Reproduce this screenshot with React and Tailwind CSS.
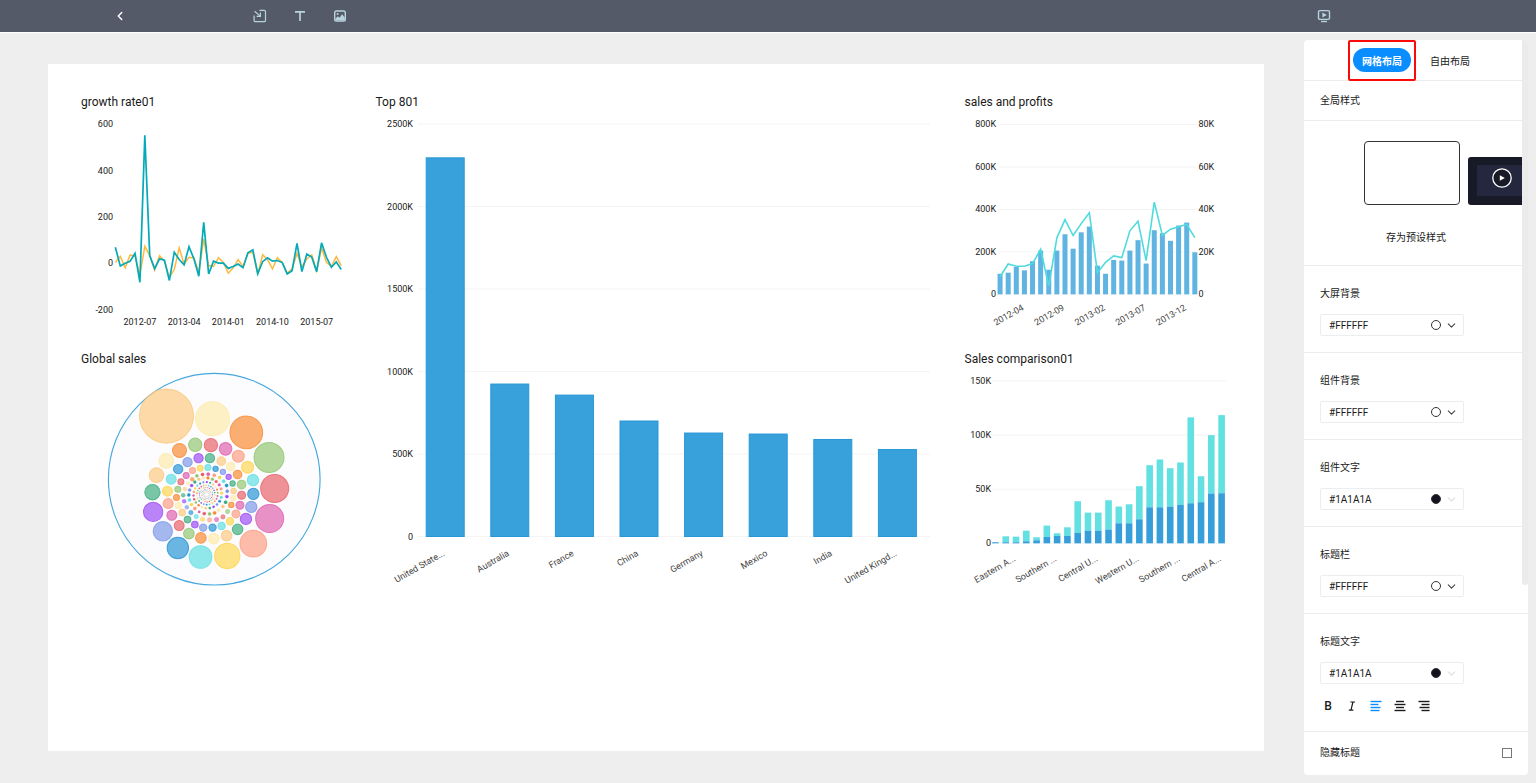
import { useState } from 'react';
import { ChevronDown, ChevronLeft } from 'lucide-react';

const GROWTH_A = [
  69, -12, 0, 9, 43, -82, 552, 33, -23, 19, 13, -74, 48, 16, -7, 72, 19, -56, 177, -46, 9, 1, 1, -22, -14, -3, -19, 45,
  58, -45, 7, 24, 9, 12, 3, -46, -32, 86, -36, 40, 27, -36, 88, 26, -17, 6, -27,
];
const GROWTH_B = [
  4, 30, -19, 36, 30, -50, 73, 33, -29, 33, 9, -61, -27, 66, -3, 26, 23, -39, 105, -10, -14, 24, 4, -43, -20, 16, -14,
  43, 48, -46, 37, 16, -24, 24, 4, -43, -24, 43, -16, 19, 36, -32, 66, 4, -14, 29, -10,
];

const COUNTRIES = [
  ['United State...', 2295],
  ['Australia', 924],
  ['France', 857],
  ['China', 700],
  ['Germany', 627],
  ['Mexico', 621],
  ['India', 588],
  ['United Kingd...', 527],
];

const SALES = [
  97, 102, 129, 113, 156, 206, 116, 206, 283, 215, 292, 319, 135, 97, 162, 159, 206, 255, 145, 302, 288, 252, 324, 338,
  198,
];
const PROFITS = [
  8.3, 14.3, 13.2, 13.2, 14.5, 21.2, 3.9, 26.6, 35.2, 27.7, 33.3, 38.4, 10.2, 15.1, 18.1, 17.3, 29.9, 34.4, 15.9, 43.4,
  27.8, 30.7, 31.8, 32.9, 26.7,
];

const TOTALS = [
  1, 6.5, 6.2, 11.7, 5.6, 16.4, 9.3, 14.8, 38.9, 28.4, 28.4, 39.8, 34, 36.1, 52.8, 72.2, 77.5, 69.4, 74.7, 116.4, 62,
  100, 118.5,
];
const LOWER = [
  1, 1, 1, 1.9, 2.8, 5.9, 6.8, 6.8, 9.6, 11.7, 11.7, 12.7, 18.5, 18.5, 22.2, 33.3, 33.3, 34, 35.5, 37, 38, 46, 46.3,
];

const BUBBLE_COLORS = [
  '#fcc87c', '#feeaa8', '#f9892f', '#90c66f', '#e96066', '#dd5eac', '#fd9c81', '#fdd54e', '#5fdfe2', '#2794d4',
  '#7b97e8', '#9c4af5', '#3bac7c',
];

// x, y, radius, from the outside of the spiral inwards
const BUBBLES = [
  [199, 153, 81], [337, 161, 51], [438, 202, 49], [506, 277, 45], [523, 370, 42], [508, 460, 42], [459, 535, 40],
  [381, 572, 38], [301, 575, 34], [233, 548, 32], [188, 498, 29], [159, 440, 29], [157, 381, 23], [169, 330, 22],
  [198, 287, 22], [238, 256, 21], [285, 239, 20], [332, 240, 20], [376, 251, 19], [414, 273, 18], [442, 306, 18],
  [458, 345, 17], [459, 386, 17], [453, 425, 17], [437, 461, 17], [412, 492, 16], [379, 511, 16], [341, 520, 16],
  [302, 518, 16], [266, 505, 16], [237, 481, 15], [215, 450, 15], [204, 415, 15], [202, 378, 15], [213, 342, 15],
  [234, 312, 14], [262, 291, 14], [295, 279, 14], [329, 279, 14], [363, 288, 13], [391, 304, 13], [412, 328, 13],
  [424, 358, 13], [424, 390, 12], [419, 420, 12], [407, 446, 12], [389, 468, 11], [364, 482, 11], [337, 487, 11],
  [309, 487, 11], [284, 478, 10], [262, 463, 10], [246, 442, 10], [234, 421, 9], [229, 397, 9], [233, 372, 9],
  [242, 350, 9], [258, 331, 9], [277, 316, 9], [300, 309, 9], [323, 307, 9], [346, 311, 8], [368, 320, 8],
  [385, 335, 8], [397, 355, 8], [400, 377, 8], [399, 398, 8], [393, 419, 8], [382, 439, 7], [368, 455, 7],
  [349, 463, 7], [328, 464, 7], [307, 462, 7], [288, 454, 7], [272, 442, 7], [260, 426, 6], [252, 408, 6],
  [249, 390, 6], [254, 371, 6], [264, 355, 6], [276, 342, 6], [290, 332, 5], [307, 328, 5], [324, 327, 5],
  [342, 330, 5], [358, 337, 5], [370, 348, 5], [379, 361, 5], [381, 378, 5], [380, 394, 5], [376, 411, 5],
  [368, 424, 5], [355, 435, 5], [343, 443, 5], [328, 446, 5], [312, 445, 5], [297, 440, 4],
];

// the long tail keeps shrinking towards the middle
for (let i = 1; i < 170; i++) {
  const dist = 56 * Math.pow(0.9865, i);
  const angle = ((113 + i * 16.2) * Math.PI) / 180;
  BUBBLES.push([319 + dist * Math.cos(angle), 387 + dist * Math.sin(angle), dist * 0.09]);
}

const toPoints = (values, x, y) => values.map((v, i) => `${x(i)},${y(v)}`).join(' ');

function AxisLabels({ ticks, x, y, anchor = 'end' }) {
  return ticks.map(([label, value]) => (
    <text key={label} x={x} y={y(value) + 3} textAnchor={anchor}>
      {label}
    </text>
  ));
}

function GridLines({ values, x1, x2, y }) {
  return values.map((v) => <line key={v} x1={x1} x2={x2} y1={y(v)} y2={y(v)} stroke="#f4f4f4" />);
}

function SlantedLabel({ x, y, children }) {
  return (
    <text transform={`translate(${x} ${y}) rotate(-30)`} textAnchor="end" fill="#444">
      {children}
    </text>
  );
}

function Chart({ title, viewBox, className = '', children }) {
  return (
    <section className={`px-3.5 pb-3 ${className}`}>
      <h2 className="text-xs leading-5 text-[#1a1a1a]">{title}</h2>
      <svg viewBox={viewBox} role="img" aria-label={title} className="block w-full fill-[#1a1a1a] text-[9px]">
        {children}
      </svg>
    </section>
  );
}

function GrowthChart() {
  const x = (i) => 34.3 + i * 4.9;
  const y = (v) => 151 - v * 0.2313;
  return (
    <Chart title="growth rate01" viewBox="0 0 266 225">
      <AxisLabels ticks={[['600', 600], ['400', 400], ['200', 200], ['0', 0], ['-200', -200]]} x={32} y={y} />
      {['2012-07', '2013-04', '2014-01', '2014-10', '2015-07'].map((label, i) => (
        <text key={label} x={x(5 + i * 9)} y={213} textAnchor="middle">
          {label}
        </text>
      ))}
      <polyline points={toPoints(GROWTH_B, x, y)} fill="none" stroke="#ffb83d" strokeWidth="1.5" />
      <polyline points={toPoints(GROWTH_A, x, y)} fill="none" stroke="#03aab9" strokeWidth="1.7" />
    </Chart>
  );
}

function TopChart() {
  const x = (i) => 69.2 + i * 64.6;
  const y = (v) => 424.5 - v * 0.165;
  const ticks = [0, 500, 1000, 1500, 2000, 2500];
  return (
    <Chart title="Top 801" viewBox="0 0 561 482" className="row-span-2">
      <GridLines values={ticks} x1={42} x2={554} y={y} />
      <AxisLabels ticks={ticks.map((t) => [t ? `${t}K` : '0', t])} x={37} y={y} />
      {COUNTRIES.map(([name, value], i) => (
        <g key={name}>
          <rect
            x={x(i) - 19}
            y={y(value)}
            width={38}
            height={value * 0.165}
            fill="#38a1db"
            stroke="#2797d8"
            strokeWidth="1"
          />
          <SlantedLabel x={x(i)} y={443}>
            {name}
          </SlantedLabel>
        </g>
      ))}
    </Chart>
  );
}

function SalesChart() {
  const x = (i) => 35 + i * 8.1;
  const y = (v) => 182 - v * 0.212;
  const yRight = (v) => y(v * 10);
  return (
    <Chart title="sales and profits" viewBox="0 0 266 225">
      <GridLines values={[0, 200, 400, 600, 800]} x1={33} x2={231} y={y} />
      <AxisLabels
        ticks={[['800K', 800], ['600K', 600], ['400K', 400], ['200K', 200], ['0', 0]]}
        x={31}
        y={y}
      />
      <AxisLabels
        ticks={[['80K', 80], ['60K', 60], ['40K', 40], ['20K', 20], ['0', 0]]}
        x={233}
        y={yRight}
        anchor="start"
      />
      {SALES.map((v, i) => (
        <rect key={i} x={x(i) - 2.5} y={y(v)} width={5} height={v * 0.212} fill="#5fb4e2" />
      ))}
      <polyline points={toPoints(PROFITS, x, yRight)} fill="none" stroke="#4fdbde" strokeWidth="1.6" />
      {['2012-04', '2012-09', '2013-02', '2013-07', '2013-12'].map((label, i) => (
        <SlantedLabel key={label} x={x(3 + i * 5)} y={197}>
          {label}
        </SlantedLabel>
      ))}
    </Chart>
  );
}

function GlobalSales() {
  return (
    <Chart title="Global sales" viewBox="0 0 266 225">
      <g transform="translate(19 -4) scale(0.3333)">
        <circle cx="342" cy="342" r="317" fill="#fcfcff" stroke="#45a7dd" strokeWidth="3.4" />
        {BUBBLES.map(([cx, cy, r], i) => (
          <circle
            key={i}
            cx={cx}
            cy={cy}
            r={r}
            fill={BUBBLE_COLORS[i % 13]}
            fillOpacity={r > 5 ? 0.68 : 1}
            stroke={BUBBLE_COLORS[i % 13]}
            strokeWidth={r > 7 ? 3 : r > 4 ? 1 : 0}
            strokeOpacity="0.8"
          />
        ))}
      </g>
    </Chart>
  );
}

function ComparisonChart() {
  const x = (i) => 30.4 + i * 10.26;
  const y = (v) => 174 - v * 1.08;
  const labels = ['Eastern A...', 'Southern ...', 'Central U...', 'Western U...', 'Southern ...', 'Central A...'];
  return (
    <Chart title="Sales comparison01" viewBox="0 0 266 225">
      <GridLines values={[0, 50, 100, 150]} x1={27} x2={261} y={y} />
      <AxisLabels ticks={[['150K', 150], ['100K', 100], ['50K', 50], ['0', 0]]} x={26} y={y} />
      {TOTALS.map((total, i) => (
        <g key={i}>
          <rect x={x(i) - 3.3} y={y(total)} width={6.6} height={(total - LOWER[i]) * 1.08} fill="#63e0e2" />
          <rect x={x(i) - 3.3} y={y(LOWER[i])} width={6.6} height={LOWER[i] * 1.08} fill="#369fda" />
        </g>
      ))}
      {labels.map((label, i) => (
        <SlantedLabel key={i} x={x(2 + i * 4)} y={191}>
          {label}
        </SlantedLabel>
      ))}
    </Chart>
  );
}

function IconButton({ label, children }) {
  return (
    <button type="button" aria-label={label} className="flex size-6 items-center justify-center text-[#b9d3dd]">
      {children}
    </button>
  );
}

function Header() {
  return (
    <header className="relative flex h-8 items-center bg-[#545a68] pr-[200px] pl-[108px] shadow-[0_1px_0_#fff]">
      <button type="button" aria-label="返回" className="flex size-6 items-center justify-center text-white">
        <ChevronLeft size={14} strokeWidth={2.5} />
      </button>
      <div className="ml-[116px] flex gap-4">
        <IconButton label="导入">
          <svg viewBox="0 0 14 14" className="size-3.5" fill="none" stroke="currentColor" strokeWidth="1.2">
            <path d="M6.5 1.3h4.7a1.3 1.3 0 0 1 1.3 1.3v8.8a1.3 1.3 0 0 1-1.3 1.3H2.4a1.3 1.3 0 0 1-1.3-1.3V6.5" />
            <path d="M1.6 2.2l5 4.4M7.4 3.4v3.9H3.6" />
          </svg>
        </IconButton>
        <IconButton label="文本">
          <svg viewBox="0 0 12 12" className="size-3" fill="none" stroke="currentColor" strokeWidth="1.7">
            <path d="M1 1.8h10M6 1.8V11" />
          </svg>
        </IconButton>
        <IconButton label="图片">
          <svg viewBox="0 0 14 14" className="size-3.5" fill="none" stroke="currentColor" strokeWidth="1.4">
            <rect x="1.7" y="2" width="10.6" height="10" rx="1.8" />
            <path d="M2.5 11.2V9.6l2.4-2.4 1.6 1.6 2.6-3.6 2.6 3.4v2.6z" fill="currentColor" stroke="none" />
            <circle cx="4.6" cy="5" r="1" fill="currentColor" stroke="none" />
          </svg>
        </IconButton>
      </div>
      <div className="ml-auto flex">
        <IconButton label="预览">
          <svg viewBox="0 0 14 14" className="size-3.5" fill="none" stroke="currentColor" strokeWidth="1.4">
            <rect x="1.5" y="1.6" width="11" height="8.8" rx="1.4" />
            <path d="M5.4 3.6l4.4 2.4-4.4 2.4z" fill="currentColor" stroke="none" />
            <path d="M4 12.5h6" />
          </svg>
        </IconButton>
      </div>
    </header>
  );
}

function ColorField({ id, label, initial, className = '', children }) {
  const [color, setColor] = useState(initial);
  const dark = color === '#1A1A1A';
  return (
    <div className={`border-b border-[#ececec] px-4 pt-4 ${className || 'pb-4'}`}>
      <label htmlFor={id} className="block leading-6">
        {label}
      </label>
      <div className="mt-2 flex h-[22px] w-36 items-center rounded-xs border border-[#ebeef1] pr-1.5 pl-2">
        <input
          id={id}
          value={color}
          onChange={(e) => setColor(e.target.value)}
          className="w-full min-w-0 flex-1 outline-none"
        />
        <span className={`size-2.5 shrink-0 rounded-full border border-[#333] ${dark ? 'bg-[#12131f]' : 'bg-white'}`} />
        <button
          type="button"
          aria-label="选择颜色"
          className={`ml-1 flex size-3 items-center justify-center ${dark ? 'text-[#ddd]' : 'text-[#444]'}`}
        >
          <ChevronDown size={13} className="shrink-0" />
        </button>
      </div>
      {children}
    </div>
  );
}

function AlignIcon({ rows }) {
  return (
    <svg viewBox="0 0 12 12" className="size-3" stroke="currentColor" strokeWidth="1.4">
      {rows.map(([from, to], i) => (
        <path key={i} d={`M${from} ${1.5 + i * 3}H${to}`} />
      ))}
    </svg>
  );
}

function TextTools() {
  return (
    <div className="mt-2.5 flex h-6 text-xs">
      <button type="button" aria-label="粗体" className="w-4 font-medium">
        B
      </button>
      <button type="button" aria-label="斜体" className="ml-2 flex w-4 items-center justify-center">
        <svg viewBox="0 0 10 10" className="size-2.5" fill="none" stroke="currentColor" strokeWidth="1.2">
          <path d="M3.4 1h4.6M1.8 9.2h4.6M5.9 1L4 9.2" />
        </svg>
      </button>
      <button
        type="button"
        aria-label="左对齐"
        className="ml-2 flex w-4 items-center justify-center text-[#0a8dff]"
      >
        <AlignIcon rows={[[0.5, 11.5], [0.5, 8.5], [0.5, 10.5], [0.5, 9.5]]} />
      </button>
      <button type="button" aria-label="居中" className="ml-2 flex w-4 items-center justify-center">
        <AlignIcon rows={[[2, 10], [0.5, 11.5], [2, 10], [0.5, 11.5]]} />
      </button>
      <button type="button" aria-label="右对齐" className="ml-2 flex w-4 items-center justify-center">
        <AlignIcon rows={[[0.5, 11.5], [3.5, 11.5], [1.5, 11.5], [3.5, 11.5]]} />
      </button>
    </div>
  );
}

function SettingsPanel() {
  return (
    <aside className="relative mt-2 mr-2 mb-2 ml-10 w-56 shrink-0 overflow-hidden rounded bg-white text-[10px] text-[#1a1a1a]">
      <div className="flex h-[41px] justify-center gap-2.5 border-b border-[#ececec] pt-2">
        <div className="relative">
          <button type="button" className="block h-6 rounded-full bg-[#0a8dff] px-[9px] pt-0.5 font-bold text-white">
            网格布局
          </button>
          <div className="pointer-events-none absolute -inset-x-[5px] -top-2 h-[41px] rounded-xs border-2 border-[#fb0a0a]" />
        </div>
        <button type="button" className="h-6 px-[9px] pt-0.5">
          自由布局
        </button>
      </div>
      <h2 className="border-b border-[#ececec] px-4 leading-[39px]">全局样式</h2>
      <div className="h-[145px] border-b border-[#ececec] pt-5">
        <div className="flex items-end gap-2 overflow-hidden pl-[60px]">
          <button
            type="button"
            aria-label="浅色样式"
            className="h-16 w-24 shrink-0 rounded border border-[#333] bg-white"
          />
          <button type="button" aria-label="深色样式" className="shrink-0">
            <svg viewBox="0 0 72 48" className="block h-12 w-[72px]">
              <rect width="72" height="48" rx="3" fill="#191a27" />
              <rect x="9" y="8" width="54" height="31" fill="#25273f" />
              <circle cx="34" cy="21" r="9.2" fill="#191a27" stroke="#fff" strokeWidth="1.3" />
              <path d="M31.8 18.2l5 2.8-5 2.8z" fill="#fff" />
            </svg>
          </button>
        </div>
        <button type="button" className="mx-auto mt-5 block h-6">
          存为预设样式
        </button>
      </div>
      <ColorField id="screen-bg" label="大屏背景" initial="#FFFFFF" />
      <ColorField id="widget-bg" label="组件背景" initial="#FFFFFF" />
      <ColorField id="widget-text" label="组件文字" initial="#1A1A1A" />
      <ColorField id="title-bar" label="标题栏" initial="#FFFFFF" />
      <ColorField id="title-text" label="标题文字" initial="#1A1A1A" className="pb-[13px]">
        <TextTools />
      </ColorField>
      <div className="flex h-[43px] items-center justify-between px-4 pb-0.5">
        <label htmlFor="hide-title">隐藏标题</label>
        <input id="hide-title" type="checkbox" className="size-2.5 appearance-none border border-[#777]" />
      </div>
      <div className="absolute top-0 right-0 h-[545px] w-1.5 rounded-b bg-[#ebebeb]" />
    </aside>
  );
}

export default function App() {
  return (
    <div className="flex min-h-screen flex-col bg-[#eee] font-['Roboto','Noto_Sans_CJK_SC',sans-serif]">
      <Header />
      <div className="flex flex-1">
        <main className="mt-8 mb-8 ml-12 min-w-0 flex-1 bg-white px-[19px] pt-7">
          <div className="grid grid-cols-[1fr_2fr_1fr]">
            <GrowthChart />
            <TopChart />
            <SalesChart />
            <GlobalSales />
            <ComparisonChart />
          </div>
        </main>
        <SettingsPanel />
      </div>
    </div>
  );
}
